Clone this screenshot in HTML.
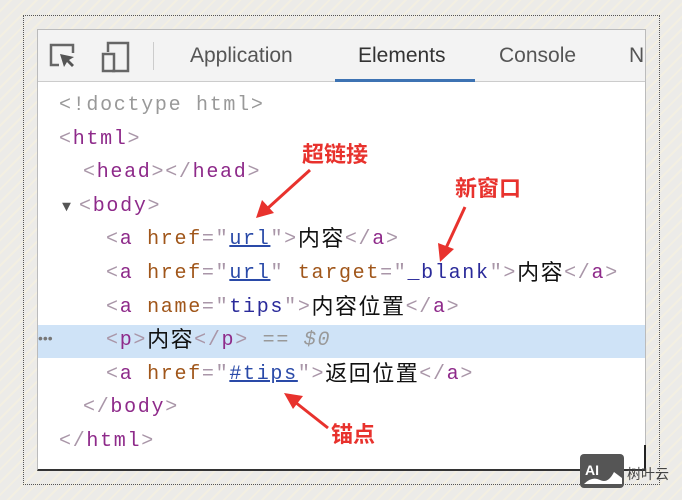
<!DOCTYPE html>
<html><head><meta charset="utf-8"><style>
*{margin:0;padding:0;box-sizing:border-box}
body{width:682px;height:500px;overflow:hidden;position:relative;background:repeating-linear-gradient(135deg,#ecebe8 0 7px,#f3efe2 7px 9px);font-family:"Liberation Sans","Noto Sans CJK SC",sans-serif}
.dot{position:absolute;left:23px;top:15px;width:637px;height:470px;border:1px dotted #555}
.panel{position:absolute;left:37px;top:29px;width:609px;height:442px;background:#fff;border:1px solid #bbb;border-bottom:2px solid #333;overflow:hidden}
.tb{position:absolute;left:0;top:0;width:100%;height:52px;background:#f3f3f3;border-bottom:1px solid #ccc}
.tab{position:absolute;top:14px;font-size:21px;color:#555}
.ul{position:absolute;left:297px;top:49px;width:140px;height:3px;background:#3d73b3}
.code{position:absolute;left:0;top:59px;width:100%;font-family:"Liberation Mono","Noto Sans CJK SC",monospace;font-size:20px;color:#222;line-height:33.6px;letter-spacing:1.7px}
.code div{height:33.6px;white-space:pre}
.g{color:#a996a8}.t{color:#8e2a8a}.a{color:#a0561a}.v{color:#2a2a9a}.l{color:#2a4aa8;text-decoration:underline}.c{color:#999}.k{color:#111;letter-spacing:1.5px;font-size:22px;line-height:20px;vertical-align:-2px;font-family:"Noto Sans CJK SC",sans-serif}
.hl{position:absolute;left:0;top:295px;width:100%;height:33px;background:#cfe3f7}
.red{position:absolute;color:#e8322d;font-size:22px;font-weight:bold;font-family:"Noto Sans CJK SC",sans-serif}
</style></head><body>
<div class="dot"></div>
<div class="panel">
<div class="tb">
<svg style="position:absolute;left:10px;top:12px" width="30" height="30" viewBox="0 0 30 30"><path d="M11 23H3V3h22v8" fill="none" stroke="#666" stroke-width="2.5"/><path d="M12 12l4 13 3-5 5 5 2-2-5-5 5-3z" fill="#555"/></svg>
<svg style="position:absolute;left:62px;top:10px" width="34" height="34" viewBox="0 0 34 34"><path d="M8 12V3h20v28H12" fill="none" stroke="#666" stroke-width="2.5"/><rect x="3" y="14" width="11" height="17" fill="none" stroke="#666" stroke-width="2.5"/></svg>
<div style="position:absolute;left:115px;top:12px;width:1px;height:28px;background:#ccc"></div>
<div class="tab" style="left:152px">Application</div>
<div class="tab" style="left:320px;color:#333">Elements</div>
<div class="tab" style="left:461px">Console</div>
<div class="tab" style="left:591px">N</div>
<div class="ul"></div>
</div>
<div class="hl"></div>
<div class="code"><div style="padding-left:21px"><span class="c">&lt;!doctype html&gt;</span></div><div style="padding-left:21px"><span class="g">&lt;</span><span class="t">html</span><span class="g">&gt;</span></div><div style="padding-left:45px"><span class="g">&lt;</span><span class="t">head</span><span class="g">&gt;&lt;/</span><span class="t">head</span><span class="g">&gt;</span></div><div style="padding-left:24px"><span style="color:#555;font-size:15px;line-height:15px;letter-spacing:8px">▼</span><span class="g">&lt;</span><span class="t">body</span><span class="g">&gt;</span></div><div style="padding-left:68px"><span class="g">&lt;</span><span class="t">a</span> <span class="a">href</span><span class="g">="</span><span class="l">url</span><span class="g">"&gt;</span><span class="k">内容</span><span class="g">&lt;/</span><span class="t">a</span><span class="g">&gt;</span></div><div style="padding-left:68px"><span class="g">&lt;</span><span class="t">a</span> <span class="a">href</span><span class="g">="</span><span class="l">url</span><span class="g">"</span> <span class="a">target</span><span class="g">="</span><span class="v">_blank</span><span class="g">"&gt;</span><span class="k">内容</span><span class="g">&lt;/</span><span class="t">a</span><span class="g">&gt;</span></div><div style="padding-left:68px"><span class="g">&lt;</span><span class="t">a</span> <span class="a">name</span><span class="g">="</span><span class="v">tips</span><span class="g">"&gt;</span><span class="k">内容位置</span><span class="g">&lt;/</span><span class="t">a</span><span class="g">&gt;</span></div><div style="padding-left:68px"><span class="g">&lt;</span><span class="t">p</span><span class="g">&gt;</span><span class="k">内容</span><span class="g">&lt;/</span><span class="t">p</span><span class="g">&gt;</span> <span class="c"><i>== $0</i></span></div><div style="padding-left:68px"><span class="g">&lt;</span><span class="t">a</span> <span class="a">href</span><span class="g">="</span><span class="l">#tips</span><span class="g">"&gt;</span><span class="k">返回位置</span><span class="g">&lt;/</span><span class="t">a</span><span class="g">&gt;</span></div><div style="padding-left:45px"><span class="g">&lt;/</span><span class="t">body</span><span class="g">&gt;</span></div><div style="padding-left:21px"><span class="g">&lt;/</span><span class="t">html</span><span class="g">&gt;</span></div></div>
<div style="position:absolute;left:0;top:300px;color:#777;font-size:14px">•••</div>
</div>
<div class="red" style="left:302px;top:137px">超链接</div>
<div class="red" style="left:455px;top:171px">新窗口</div>
<div class="red" style="left:331px;top:417px">锚点</div>
<svg style="position:absolute;left:0;top:0" width="682" height="500">
<g stroke="#e8322d" stroke-width="3" fill="#e8322d">
<line x1="310" y1="170" x2="268" y2="208"/><path d="M256 218l6-18 12 13z" stroke="none"/>
<line x1="465" y1="207" x2="446" y2="248"/><path d="M440 262l-2-19 16 6z" stroke="none"/>
<line x1="328" y1="428" x2="295" y2="402"/><path d="M284 393l19 3-10 13z" stroke="none"/>
</g>
<rect x="580" y="454" width="44" height="34" rx="4" fill="#555"/>
<text x="585" y="475" font-family="Liberation Sans" font-weight="bold" font-size="14" fill="#fff">AI</text>
<path d="M584 484q8-8 16-4t14-8l8 6v6h-38z" fill="#fff"/>
<line x1="645" y1="445" x2="645" y2="470" stroke="#222" stroke-width="2"/>
<text x="627" y="479" font-family="Noto Sans CJK SC" font-size="14" fill="#444">树叶云</text>
</svg>
</body></html>
